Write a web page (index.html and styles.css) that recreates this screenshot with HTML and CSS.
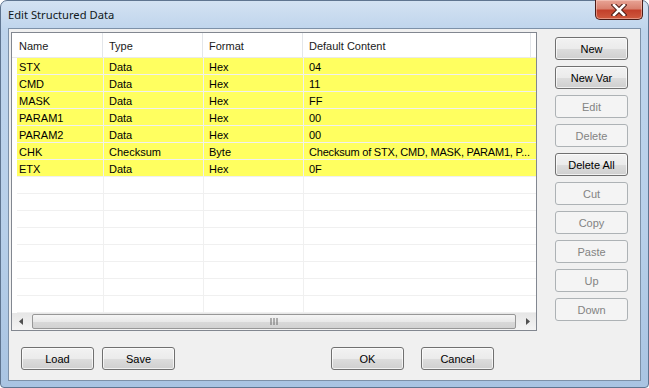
FILE: index.html
```html
<!DOCTYPE html>
<html lang="en">
<head>
  <meta charset="UTF-8" />
  <title>Edit Structured Data</title>
  <link rel="stylesheet" href="styles.css">
</head>
<body>
  <div class="window">
    <div class="titlebar">
      <span class="title">Edit Structured Data</span>
      <div class="close">
        <svg width="16" height="12" viewBox="0 0 16 12">
          <path d="M3 1 L13 11 M13 1 L3 11" stroke="#4a1a14" stroke-width="4.6" stroke-linecap="square" />
          <path d="M3 1 L13 11 M13 1 L3 11" stroke="#ffffff" stroke-width="2.6" stroke-linecap="square" />
        </svg>
      </div>
    </div>

    <div class="client">
      <div class="main">
        <div class="list">
          <div class="header">
            <div class="hcell">Name</div>
            <div class="hcell">Type</div>
            <div class="hcell">Format</div>
            <div class="hcell">Default Content</div>
          </div>
          <div class="rows">
            <div class="row filled"><div class="cell">STX</div><div class="cell">Data</div><div class="cell">Hex</div><div class="cell">04</div></div>
            <div class="row filled"><div class="cell">CMD</div><div class="cell">Data</div><div class="cell">Hex</div><div class="cell">11</div></div>
            <div class="row filled"><div class="cell">MASK</div><div class="cell">Data</div><div class="cell">Hex</div><div class="cell">FF</div></div>
            <div class="row filled"><div class="cell">PARAM1</div><div class="cell">Data</div><div class="cell">Hex</div><div class="cell">00</div></div>
            <div class="row filled"><div class="cell">PARAM2</div><div class="cell">Data</div><div class="cell">Hex</div><div class="cell">00</div></div>
            <div class="row filled"><div class="cell">CHK</div><div class="cell">Checksum</div><div class="cell">Byte</div><div class="cell long">Checksum of STX, CMD, MASK, PARAM1, P...</div></div>
            <div class="row filled"><div class="cell">ETX</div><div class="cell">Data</div><div class="cell">Hex</div><div class="cell">0F</div></div>
            <div class="row"><div class="cell"></div><div class="cell"></div><div class="cell"></div><div class="cell"></div></div>
            <div class="row"><div class="cell"></div><div class="cell"></div><div class="cell"></div><div class="cell"></div></div>
            <div class="row"><div class="cell"></div><div class="cell"></div><div class="cell"></div><div class="cell"></div></div>
            <div class="row"><div class="cell"></div><div class="cell"></div><div class="cell"></div><div class="cell"></div></div>
            <div class="row"><div class="cell"></div><div class="cell"></div><div class="cell"></div><div class="cell"></div></div>
            <div class="row"><div class="cell"></div><div class="cell"></div><div class="cell"></div><div class="cell"></div></div>
            <div class="row"><div class="cell"></div><div class="cell"></div><div class="cell"></div><div class="cell"></div></div>
            <div class="row"><div class="cell"></div><div class="cell"></div><div class="cell"></div><div class="cell"></div></div>
          </div>
          <div class="hscroll">
            <div class="arrow">
              <svg width="4" height="7" viewBox="0 0 4 7"><path d="M4 0 L0 3.5 L4 7 Z" fill="#505050" /></svg>
            </div>
            <div class="track">
              <div class="thumb">
                <svg width="8" height="7" viewBox="0 0 8 7"><path d="M1 0 V7 M4 0 V7 M7 0 V7" stroke="#6a6a6a" stroke-width="1" /></svg>
              </div>
            </div>
            <div class="arrow">
              <svg width="4" height="7" viewBox="0 0 4 7"><path d="M0 0 L4 3.5 L0 7 Z" fill="#505050" /></svg>
            </div>
          </div>
        </div>

        <div class="side">
          <button class="btn">New</button>
          <button class="btn">New Var</button>
          <button class="btn" disabled>Edit</button>
          <button class="btn" disabled>Delete</button>
          <button class="btn">Delete All</button>
          <button class="btn" disabled>Cut</button>
          <button class="btn" disabled>Copy</button>
          <button class="btn" disabled>Paste</button>
          <button class="btn" disabled>Up</button>
          <button class="btn" disabled>Down</button>
        </div>
      </div>

      <div class="bottom">
        <div class="group">
          <button class="btn">Load</button>
          <button class="btn">Save</button>
        </div>
        <div class="group ok-group">
          <button class="btn">OK</button>
          <button class="btn">Cancel</button>
        </div>
      </div>
    </div>
  </div>
</body>
</html>
```

FILE: styles.css
```css
body {
  margin: 0;
  padding: 0;
  width: 649px;
  height: 388px;
  overflow: hidden;
  background: #ffffff;
  font-family: "Liberation Sans", Arial, sans-serif;
  font-size: 11px;
  color: #000000;
}

.window {
  box-sizing: border-box;
  width: 649px;
  height: 388px;
  border: 1px solid #5f7590;
  border-radius: 7px 7px 4px 4px;
  background: linear-gradient(180deg, #d3e2f2 0%, #bed4ec 30px, #b7cfe9 60%, #a9c4e2 100%);
  padding: 0 7px 0 7px;
  display: flex;
  flex-direction: column;
}

.titlebar {
  height: 27px;
  display: flex;
  justify-content: space-between;
  align-items: flex-start;
}

.title {
  font-family: "Noto Sans", "DejaVu Sans", sans-serif;
  font-size: 11.2px;
  color: #101820;
  margin-top: 6px;
}

.close {
  box-sizing: border-box;
  width: 48px;
  height: 20px;
  margin-top: -1px;
  margin-right: -2px;
  border: 1px solid #4b1c17;
  border-top: none;
  border-radius: 0 0 5px 5px;
  background: linear-gradient(180deg, #e8a496 0%, #d9816f 45%, #c3402b 55%, #cf5a3f 100%);
  box-shadow: inset 0 0 0 1px rgba(255, 220, 210, 0.45);
  display: flex;
  align-items: center;
  justify-content: center;
}

.client {
  box-sizing: border-box;
  width: 633px;
  height: 353px;
  border: 1px solid #7d91a8;
  background: #f0f0f0;
  padding: 3px 0 0 2px;
}

.main {
  display: flex;
  align-items: flex-start;
}

.list {
  box-sizing: border-box;
  width: 526px;
  height: 299px;
  border: 1px solid #828790;
  background: #ffffff;
  display: flex;
  flex-direction: column;
}

.header {
  box-sizing: border-box;
  height: 25px;
  display: grid;
  grid-template-columns: 91px 100px 100px 228px;
  border-bottom: 1px solid #eaeaea;
}

.hcell {
  padding: 3px 0 0 6px;
  line-height: 21px;
  border-right: 1px solid #e3e6ea;
  color: #1a1a1a;
}

.hcell:first-child {
  padding-left: 7px;
}

.rows {
  flex: 1;
  overflow: hidden;
}

.row {
  box-sizing: border-box;
  height: 17px;
  margin-left: 5px;
  display: grid;
  grid-template-columns: 86px 100px 100px 228px;
  border-bottom: 1px solid #f0f0f0;
}

.row.filled {
  background: #ffff60;
}

.cell {
  padding: 2px 0 0 5px;
  line-height: 14px;
  border-left: 1px solid #f0f0f0;
  white-space: nowrap;
  overflow: hidden;
}

.cell:first-child {
  padding-left: 2px;
  border-left: none;
}

.cell.long {
  letter-spacing: -0.2px;
}

.hscroll {
  height: 17px;
  display: flex;
  background: linear-gradient(180deg, #e6e6e6 0%, #f4f4f4 100%);
}

.arrow {
  width: 17px;
  display: flex;
  align-items: center;
  justify-content: center;
}

.track {
  flex: 1;
  padding: 1px 3px;
  display: flex;
}

.thumb {
  box-sizing: border-box;
  flex: 1;
  border: 1px solid #979797;
  border-radius: 2px;
  background: linear-gradient(180deg, #f5f5f5 0%, #e9e9e9 50%, #d9d9d9 51%, #d2d2d2 100%);
  display: flex;
  align-items: center;
  justify-content: center;
}

.side {
  margin-left: 18px;
  margin-top: 5px;
  display: flex;
  flex-direction: column;
  gap: 6px;
}

.btn {
  box-sizing: border-box;
  width: 73px;
  height: 23px;
  padding: 0;
  border: 1px solid #707070;
  border-radius: 3px;
  background: linear-gradient(180deg, #f2f2f2 0%, #ebebeb 50%, #dddddd 51%, #cfcfcf 100%);
  box-shadow: inset 0 0 0 1px rgba(255, 255, 255, 0.7);
  font-family: "Liberation Sans", Arial, sans-serif;
  font-size: 11px;
  color: #000000;
}

.btn:disabled {
  border-color: #adb2b5;
  background: #f4f4f4;
  box-shadow: none;
  color: #838383;
}

.bottom {
  display: flex;
  margin-top: 16px;
  padding-left: 10px;
}

.group {
  display: flex;
  gap: 8px;
}

.ok-group {
  margin-left: 156px;
  gap: 17px;
}
```
